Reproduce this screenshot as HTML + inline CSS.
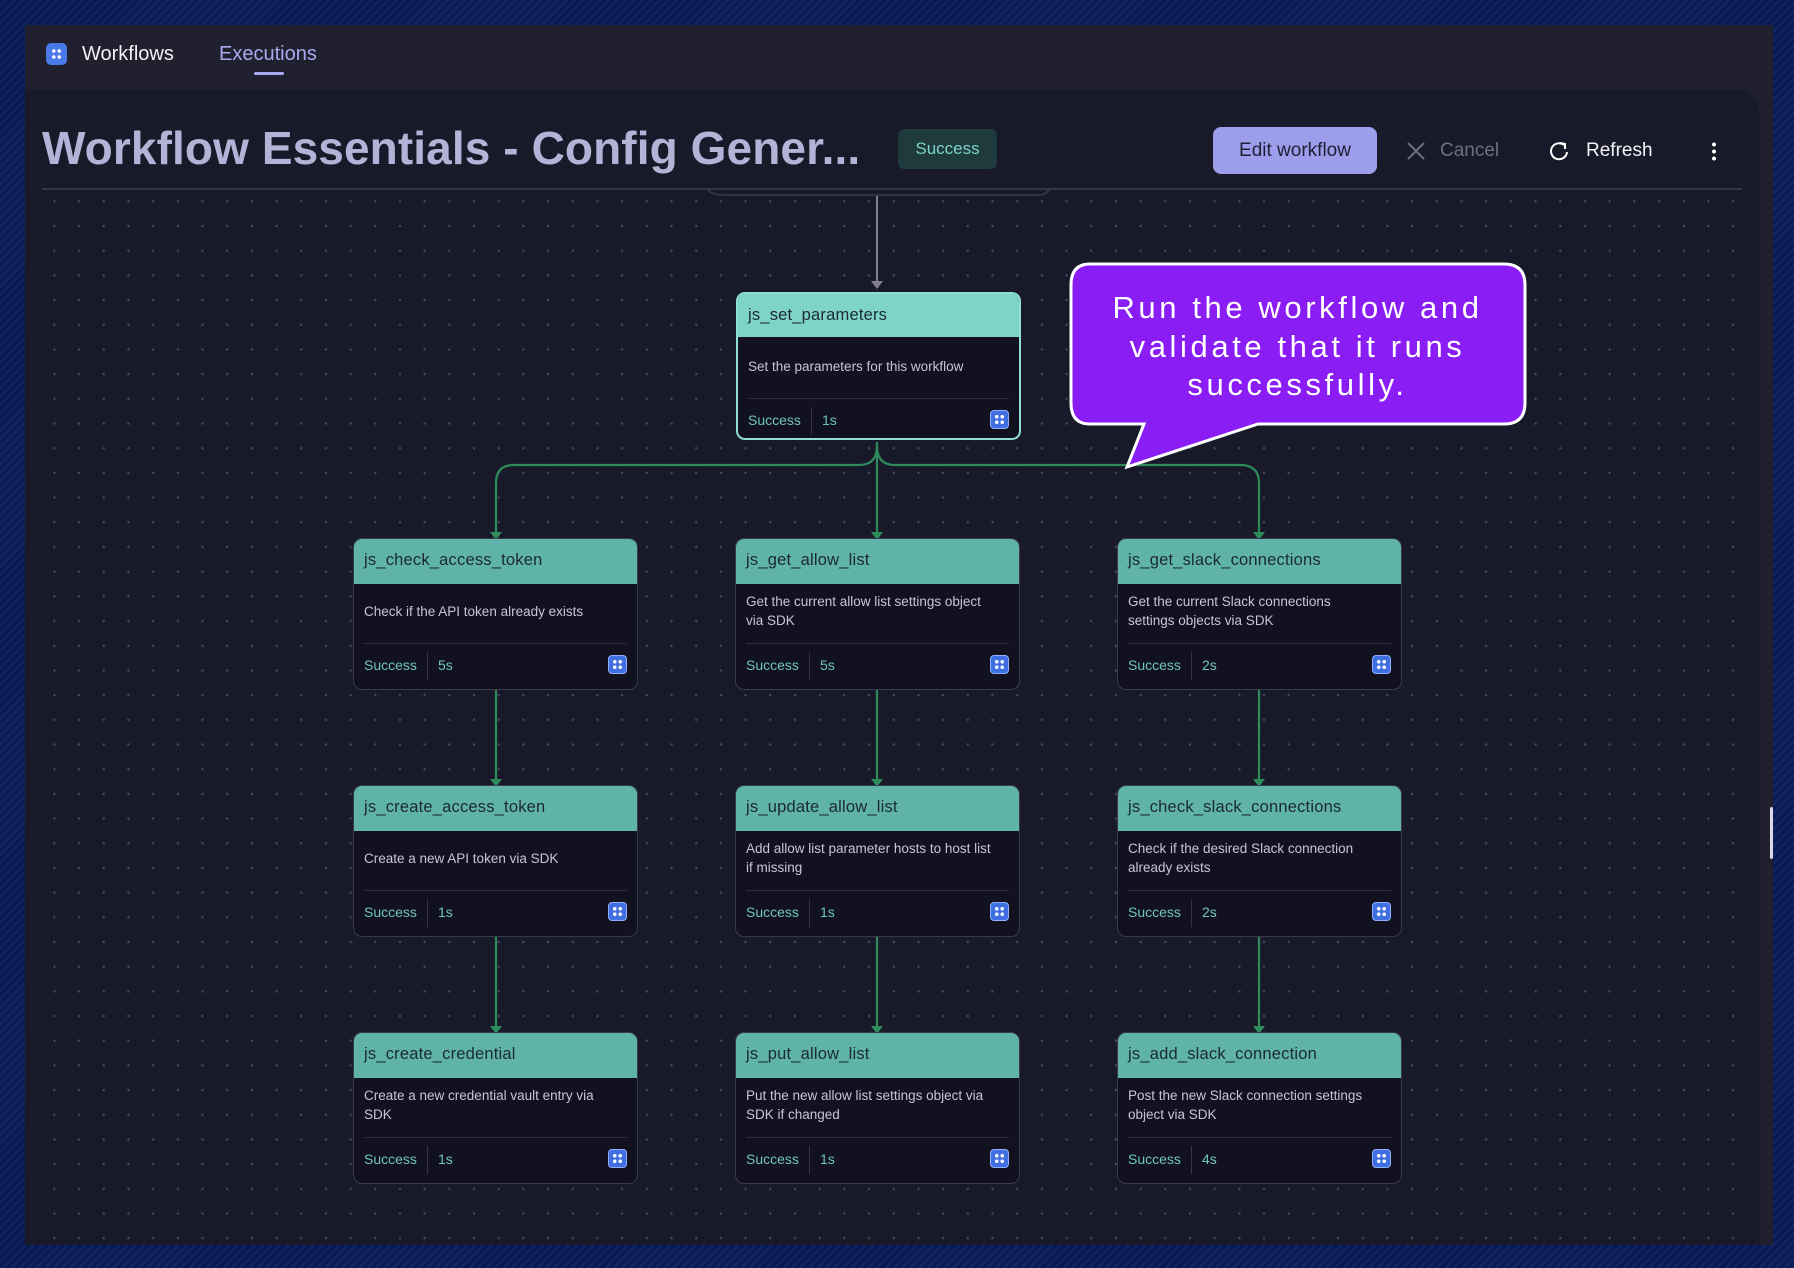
<!DOCTYPE html>
<html><head><meta charset="utf-8"><style>
*{box-sizing:border-box;margin:0;padding:0}
body{width:1794px;height:1268px;overflow:hidden;background:#0b1c55;font-family:"Liberation Sans",sans-serif;position:relative}
.bg{position:absolute;inset:0;background:repeating-linear-gradient(135deg,#0a1a50 0 3px,#0e2463 3px 6px)}
.win{position:absolute;left:25px;top:25px;width:1748px;height:1220px;background:#20202f}
.nav{position:absolute;left:0;top:0;width:1748px;height:64px}
.main{position:absolute;left:0;top:64px;width:1735px;height:1156px;background:#191a29;border-top-right-radius:26px;overflow:hidden}
.grid{position:absolute;left:17px;top:100px;width:1700px;height:1060px;background-image:radial-gradient(circle,#454660 1.1px,transparent 1.4px);background-size:24.7px 24.7px;background-position:0 0}
.t{position:absolute;white-space:nowrap}
.node{position:absolute;width:285px;height:152px;background:#12111f;border:1.5px solid #3a3a4e;border-radius:9px;overflow:hidden}
.node .h{height:45px;background:#5fb3a8;color:#1b2a30;font-size:16.5px;padding:12px 10px 0 10px;letter-spacing:.2px}
.node .d{position:absolute;left:10px;right:24px;top:47px;height:50px;display:flex;align-items:center;color:#c6c6d6;font-size:13.5px;line-height:19px}
.node .ln{position:absolute;left:10px;right:10px;top:104px;border-top:1px solid #2e2e40}
.node .f{position:absolute;left:10px;top:118px;font-size:14px;color:#6fc6b9}
.node .sep{position:absolute;left:73px;top:113px;height:28px;border-left:1px solid #33334a}
.node .du{position:absolute;left:84px;top:118px;font-size:14px;color:#6fc6b9}
.ic{position:absolute;right:10px;top:116px;width:19px;height:19px;border-radius:4px;background:#3f6fe0;border:1px solid #8fb0ff}
.ic:before{content:"";position:absolute;left:3px;top:3px;width:11px;height:11px;background:radial-gradient(circle,#fff 1.6px,transparent 2px) 0 0/5.5px 5.5px}
</style></head><body>
<div class="bg"></div>
<div class="win">
 <div class="nav">
  <div style="position:absolute;left:21px;top:18px;width:21px;height:22px;border-radius:5px;background:#4a78e8"><div style="position:absolute;left:5px;top:5px;width:11px;height:12px;background:radial-gradient(circle,#fff 1.6px,transparent 2px) 0 0/5.5px 6px"></div></div>
  <div class="t" style="left:57px;top:18px;font-size:20px;color:#f0f0f6">Workflows</div>
  <div class="t" style="left:194px;top:18px;font-size:20px;color:#a9aaf0">Executions</div>
  <div style="position:absolute;left:229px;top:47px;width:30px;height:3px;border-radius:2px;background:#a9aaf0"></div>
 </div>
 <div class="main">
  <div class="grid"></div>
  <div class="t" style="left:17px;top:32px;font-size:46px;font-weight:bold;color:#b3b3d8;letter-spacing:.1px">Workflow Essentials - Config Gener...</div>
  <div class="t" style="left:873px;top:40px;width:99px;height:40px;border-radius:6px;background:#1f3a3d;color:#7dd3c6;font-size:17px;text-align:center;line-height:40px">Success</div>
  <div class="t" style="left:1188px;top:38px;width:164px;height:47px;border-radius:8px;background:#9c9deb;color:#1f2036;font-size:19px;text-align:center;line-height:47px">Edit workflow</div>
  <svg class="t" style="left:1381px;top:52px" width="20" height="20"><path d="M2 2L18 18M18 2L2 18" stroke="#6b6d80" stroke-width="2"/></svg>
  <div class="t" style="left:1415px;top:51px;font-size:19px;color:#6e7082">Cancel</div>
  <svg class="t" style="left:1523px;top:51px" width="22" height="22"><path d="M16 5A8 8 0 1 0 19 12" fill="none" stroke="#fff" stroke-width="2"/><path d="M12 3L17 4L17 9" fill="none" stroke="#fff" stroke-width="2"/></svg>
  <div class="t" style="left:1561px;top:51px;font-size:19px;color:#f2f2f8">Refresh</div>
  <div class="t" style="left:1687px;top:52px;width:4px;height:20px;background:radial-gradient(circle,#fff 1.8px,transparent 2.2px) 0 0/4px 7px"></div>
  <div style="position:absolute;left:17px;top:99px;width:1700px;height:2px;background:#34354a"></div>
  <svg class="t" style="left:0;top:-25px" width="1735" height="1181">
   <path d="M682 125Q686 131 700 131L1015 131Q1020 131 1025 125" fill="none" stroke="#3a3a4e" stroke-width="1.5"/>
   <path d="M852 132L852 220" stroke="#80808f" stroke-width="2"/><path d="M846 217L852 225L858 217Z" fill="#80808f"/>
   <g stroke="#2f8a5c" stroke-width="2.2" fill="none">
    <path d="M852 378L852 474"/>
    <path d="M852 382Q852 401 834 401L489 401Q471 401 471 419L471 473"/>
    <path d="M852 382Q852 401 870 401L1215 401Q1234 401 1234 419L1234 473"/>
    <path d="M471 626L471 720M852 626L852 720M1234 626L1234 720"/>
    <path d="M471 873L471 967M852 873L852 967M1234 873L1234 967"/>
   </g>
   <g fill="#2f8a5c"><path d="M465 468L471 476L477 468Z"/><path d="M846 468L852 476L858 468Z"/><path d="M1228 468L1234 476L1240 468Z"/>
   <path d="M465 715L471 723L477 715Z"/><path d="M846 715L852 723L858 715Z"/><path d="M1228 715L1234 723L1240 715Z"/>
   <path d="M465 962L471 970L477 962Z"/><path d="M846 962L852 970L858 962Z"/><path d="M1228 962L1234 970L1240 962Z"/></g>
  </svg>
  <div class="node" style="left:711px;top:203px;height:148px;border:2px solid #8fe0d3"><div class="h" style="background:#7fd4c8;height:43px">js_set_parameters</div><div class="d">Set the parameters for this workflow</div><div class="ln"></div><div class="f">Success</div><div class="sep"></div><div class="du">1s</div><div class="ic"></div></div>

  <div class="node" style="left:328px;top:449px"><div class="h">js_check_access_token</div><div class="d">Check if the API token already exists</div><div class="ln"></div><div class="f">Success</div><div class="sep"></div><div class="du">5s</div><div class="ic"></div></div>
  <div class="node" style="left:710px;top:449px"><div class="h">js_get_allow_list</div><div class="d">Get the current allow list settings object via SDK</div><div class="ln"></div><div class="f">Success</div><div class="sep"></div><div class="du">5s</div><div class="ic"></div></div>
  <div class="node" style="left:1092px;top:449px"><div class="h">js_get_slack_connections</div><div class="d">Get the current Slack connections settings objects via SDK</div><div class="ln"></div><div class="f">Success</div><div class="sep"></div><div class="du">2s</div><div class="ic"></div></div>

  <div class="node" style="left:328px;top:696px"><div class="h">js_create_access_token</div><div class="d">Create a new API token via SDK</div><div class="ln"></div><div class="f">Success</div><div class="sep"></div><div class="du">1s</div><div class="ic"></div></div>
  <div class="node" style="left:710px;top:696px"><div class="h">js_update_allow_list</div><div class="d">Add allow list parameter hosts to host list if missing</div><div class="ln"></div><div class="f">Success</div><div class="sep"></div><div class="du">1s</div><div class="ic"></div></div>
  <div class="node" style="left:1092px;top:696px"><div class="h">js_check_slack_connections</div><div class="d">Check if the desired Slack connection already exists</div><div class="ln"></div><div class="f">Success</div><div class="sep"></div><div class="du">2s</div><div class="ic"></div></div>

  <div class="node" style="left:328px;top:943px"><div class="h">js_create_credential</div><div class="d">Create a new credential vault entry via SDK</div><div class="ln"></div><div class="f">Success</div><div class="sep"></div><div class="du">1s</div><div class="ic"></div></div>
  <div class="node" style="left:710px;top:943px"><div class="h">js_put_allow_list</div><div class="d">Put the new allow list settings object via SDK if changed</div><div class="ln"></div><div class="f">Success</div><div class="sep"></div><div class="du">1s</div><div class="ic"></div></div>
  <div class="node" style="left:1092px;top:943px"><div class="h">js_add_slack_connection</div><div class="d">Post the new Slack connection settings object via SDK</div><div class="ln"></div><div class="f">Success</div><div class="sep"></div><div class="du">4s</div><div class="ic"></div></div>
 </div>
 <div style="position:absolute;left:1745px;top:782px;width:3px;height:52px;background:#d8d8e8;border-radius:2px"></div>
</div>
<svg class="t" style="left:1068px;top:261px" width="462" height="212">
 <path d="M22 3L436 3Q457 3 457 24L457 142Q457 163 436 163L190 163L59 206L76 163L22 163Q3 163 3 142L3 24Q3 3 22 3Z" fill="#8a1cf4" stroke="#fff" stroke-width="3"/>
</svg>
<div class="t" style="left:1071px;top:289px;width:453px;text-align:center;color:#fff;font-size:31px;line-height:38.5px;letter-spacing:3.6px;white-space:normal">Run the workflow and<br>validate that it runs<br>successfully.</div>
</body></html>
